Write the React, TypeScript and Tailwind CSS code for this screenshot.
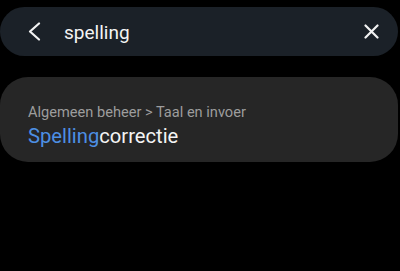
import { useState } from "react";

export default function App() {
  const [query, setQuery] = useState("spelling");

  return (
    <div
      className="h-[271px] w-[400px] overflow-hidden bg-black"
      style={{ fontFamily: "Roboto, 'Noto Sans', sans-serif" }}
    >
      <div className="mr-[2px] mt-[7px] flex h-[49px] items-center rounded-full bg-[#1b2128]">
        <button type="button" className="ml-[26px] flex h-[20px] w-[16px] items-center justify-center">
          <svg width="14" height="19" viewBox="0 0 14 19" fill="none">
            <path d="M12 1.5 L3 9.5 L12 17.5" stroke="#f2f2f2" strokeWidth="2.2" strokeLinecap="round" strokeLinejoin="round" />
          </svg>
        </button>
        <input
          value={query}
          onChange={(e) => setQuery(e.target.value)}
          className="ml-[22px] mt-[3px] flex-1 bg-transparent text-[19px] text-[#f4f4f4] outline-none"
        />
        <button type="button" className="mr-[19px] flex h-[16px] w-[16px] items-center justify-center">
          <svg width="15" height="15" viewBox="0 0 15 15" fill="none">
            <path d="M1.5 1.5 L13.5 13.5 M13.5 1.5 L1.5 13.5" stroke="#f2f2f2" strokeWidth="2.2" strokeLinecap="round" />
          </svg>
        </button>
      </div>

      <div className="mr-[2px] mt-[21px] flex h-[85px] flex-col rounded-[28px] bg-[#262626] pl-[28px] pt-[26px]">
        <p className="text-[14.6px] leading-[18px] text-[#9d9d9d]">Algemeen beheer &gt; Taal en invoer</p>
        <p className="mt-[3px] text-[20.2px] leading-[25px] text-[#f4f4f4]">
          <span className="text-[#4d8fe4]">Spelling</span>correctie
        </p>
      </div>
    </div>
  );
}
